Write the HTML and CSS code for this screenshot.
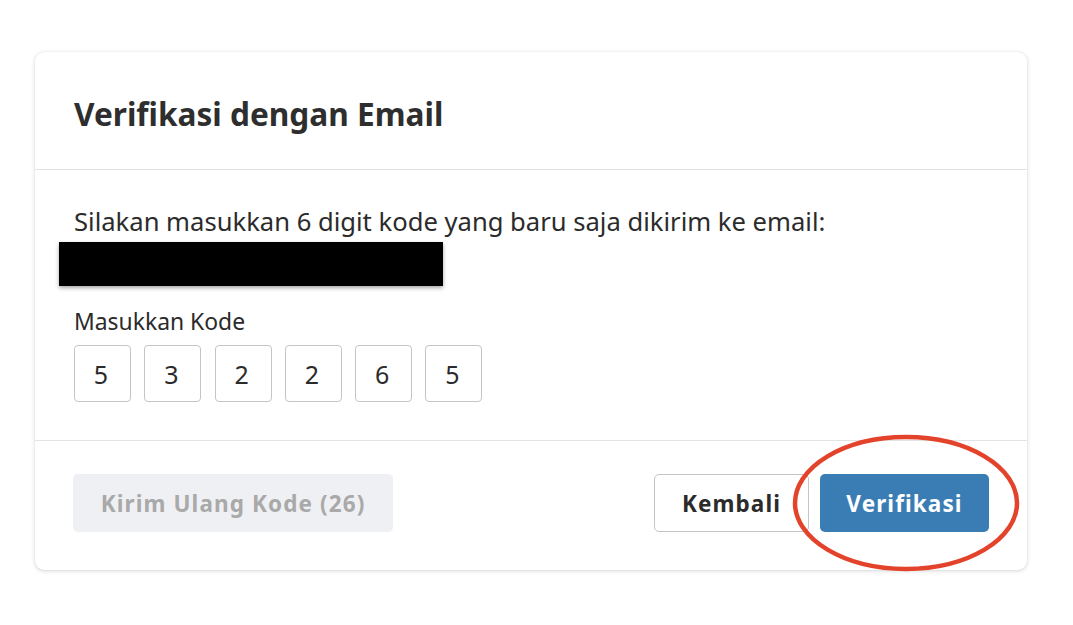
FILE: index.html
```html
<!DOCTYPE html>
<html lang="id">
<head>
<meta charset="utf-8">
<link rel="stylesheet" href="styles.css">
</head>
<body>
<div class="page">
  <div class="card">
    <div class="card-header">
      <h1 class="title">Verifikasi dengan Email</h1>
    </div>
    <div class="card-body">
      <p class="intro">Silakan masukkan 6 digit kode yang baru saja dikirim ke email:</p>
      <div class="redact"></div>
      <div class="label">Masukkan Kode</div>
      <div class="code">
        <div class="digit">5</div>
        <div class="digit">3</div>
        <div class="digit">2</div>
        <div class="digit">2</div>
        <div class="digit">6</div>
        <div class="digit">5</div>
      </div>
    </div>
    <div class="card-footer">
      <button class="btn btn-resend">Kirim Ulang Kode (26)</button>
      <div class="actions">
        <button class="btn btn-back">Kembali</button>
        <div class="verify-wrap">
          <button class="btn btn-verify">Verifikasi</button>
          <svg class="circle" width="240" height="150" viewBox="0 0 240 150">
            <ellipse cx="120" cy="75" rx="111" ry="66" fill="none" stroke="#e4432b" stroke-width="4.5"/>
          </svg>
        </div>
      </div>
    </div>
  </div>
</div>
</body>
</html>
```

FILE: styles.css
```css
* { box-sizing: border-box; }
html, body { margin: 0; padding: 0; background: #fff; }
body {
  font-family: "Noto Sans", "Open Sans", sans-serif;
  color: #2b2b2b;
  width: 1073px;
  height: 625px;
  overflow: hidden;
}
.page {
  padding: 52px 0 0 35px;
}
.card {
  width: 992px;
  height: 518px;
  background: #fff;
  border-radius: 9px;
  box-shadow: 0 1px 4px rgba(0,0,0,0.16), 0 0 1px rgba(0,0,0,0.12);
  display: flex;
  flex-direction: column;
}
.card-header {
  height: 118px;
  border-bottom: 1.5px solid #e3e3e3;
  padding: 43px 39px 0 39px;
}
.title {
  margin: 0;
  font-size: 31.6px;
  line-height: 38px;
  font-weight: 700;
  color: #2e2e2e;
}
.card-body {
  height: 271px;
  border-bottom: 1.5px solid #e3e3e3;
  padding: 34px 39px 0 39px;
}
.intro {
  margin: 0;
  font-size: 25.6px;
  line-height: 36px;
  color: #2b2b2b;
}
.redact {
  width: 384px;
  height: 44px;
  background: #000;
  margin: 2px 0 0 -15px;
  box-shadow: 0 2px 4px rgba(0,0,0,0.35);
}
.label {
  margin-top: 22px;
  font-size: 22.9px;
  line-height: 28px;
  color: #2b2b2b;
}
.code {
  display: flex;
  gap: 13.3px;
  margin-top: 9px;
}
.digit {
  width: 57px;
  height: 57px;
  border: 1px solid #c4c4c4;
  border-radius: 4px;
  display: flex;
  align-items: center;
  justify-content: center;
  font-size: 25px;
  color: #2b2b2b;
  padding-right: 3px;
}
.card-footer {
  flex: 1;
  display: flex;
  align-items: flex-start;
  justify-content: space-between;
  padding: 33px 38px 0 38px;
}
.btn {
  font-family: "Noto Sans", "Open Sans", sans-serif;
  font-weight: 700;
  font-size: 22.5px;
  letter-spacing: 1.1px;
  height: 58px;
  border-radius: 5px;
  cursor: pointer;
  padding: 0;
}
.btn-resend {
  width: 320px;
  background: #eff0f3;
  border: none;
  color: #a9a9a9;
}
.actions {
  display: flex;
  gap: 11px;
  align-items: center;
}
.btn-back {
  width: 155px;
  background: #fff;
  border: 1px solid #c4c4c4;
  color: #2b2b2b;
}
.verify-wrap {
  position: relative;
}
.btn-verify {
  width: 169px;
  background: #3a7db5;
  border: none;
  color: #fff;
  display: block;
}
.circle {
  position: absolute;
  left: -34px;
  top: -46px;
  pointer-events: none;
}
```
